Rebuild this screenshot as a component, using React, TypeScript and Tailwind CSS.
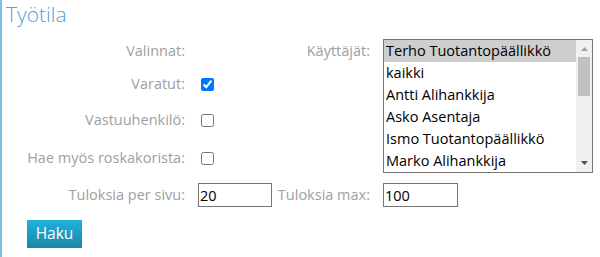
import React from "react";

const users = [
  "Terho Tuotantopäällikkö",
  "kaikki",
  "Antti Alihankkija",
  "Asko Asentaja",
  "Ismo Tuotantopäällikkö",
  "Marko Alihankkija",
  "Pekka Asentaja",
  "Seppo Alihankkija",
];

function Label({ children }: { children: React.ReactNode }) {
  return <div className="flex items-center justify-end text-[#a0a0a0] whitespace-nowrap">{children}</div>;
}

function Check({ checked = false }: { checked?: boolean }) {
  return (
    <div className="flex items-center">
      <input type="checkbox" defaultChecked={checked} className="w-[13px] h-[13px] m-0 ml-[3px]" />
    </div>
  );
}

export default function App() {
  return (
    <div
      className="w-[600px] h-[257px] bg-white border-l-2 border-[#7cbde0] overflow-hidden text-[14.5px] leading-none"
      style={{ fontFamily: '"Open Sans", sans-serif' }}
    >
      {/* Title */}
      <h1 className="pl-[4px] text-[21px] leading-[28px] font-light text-[#5a9bd3]">Työtila</h1>

      {/* Form */}
      <div className="mt-[11px] grid grid-cols-[183px_74px_85px_210px] grid-rows-[24px_42px_30px_46px_28px] gap-x-[13px]">
        <Label>Valinnat:</Label>
        <div />
        <Label>Käyttäjät:</Label>

        {/* Listbox */}
        <div className="row-span-4 self-start h-[134px] border border-[#767676] flex overflow-hidden">
          <div className="flex-1 overflow-hidden">
            {users.map((u, i) => (
              <div
                key={u}
                className={`h-[22px] pl-[2px] flex items-center text-black ${i === 0 ? "bg-[#cecece]" : ""}`}
              >
                {u}
              </div>
            ))}
          </div>
          <div className="w-[16px] bg-[#f0f0f0] flex flex-col items-center">
            <svg width="9" height="17" viewBox="0 0 9 17" className="shrink-0">
              <path d="M1 11 L4.5 7 L8 11 Z" fill="#a3a3a3" />
            </svg>
            <div className="w-[12px] h-[39px] bg-[#c1c1c1]" />
            <div className="flex-1" />
            <svg width="9" height="17" viewBox="0 0 9 17" className="shrink-0">
              <path d="M1 6 L8 6 L4.5 10 Z" fill="#505050" />
            </svg>
          </div>
        </div>

        <Label>Varatut:</Label>
        <Check checked />
        <div />

        <Label>Vastuuhenkilö:</Label>
        <Check />
        <div />

        <Label>Hae myös roskakorista:</Label>
        <Check />
        <div />

        <Label>Tuloksia per sivu:</Label>
        <div className="flex items-center">
          <input
            defaultValue="20"
            className="w-[74px] h-[24px] border border-[#767676] px-[1px] py-0 leading-[22px] text-black outline-none"
          />
        </div>
        <Label>Tuloksia max:</Label>
        <div className="flex items-center">
          <input
            defaultValue="100"
            className="w-[75px] h-[24px] border border-[#767676] px-[1px] py-0 leading-[22px] text-black outline-none"
          />
        </div>
      </div>

      {/* Button */}
      <div className="mt-[11px] pl-[25px]">
        <button className="w-[55px] h-[28px] bg-gradient-to-b from-[#1fb2da] to-[#1a86a9] text-white text-[15.5px]">
          Haku
        </button>
      </div>
    </div>
  );
}
